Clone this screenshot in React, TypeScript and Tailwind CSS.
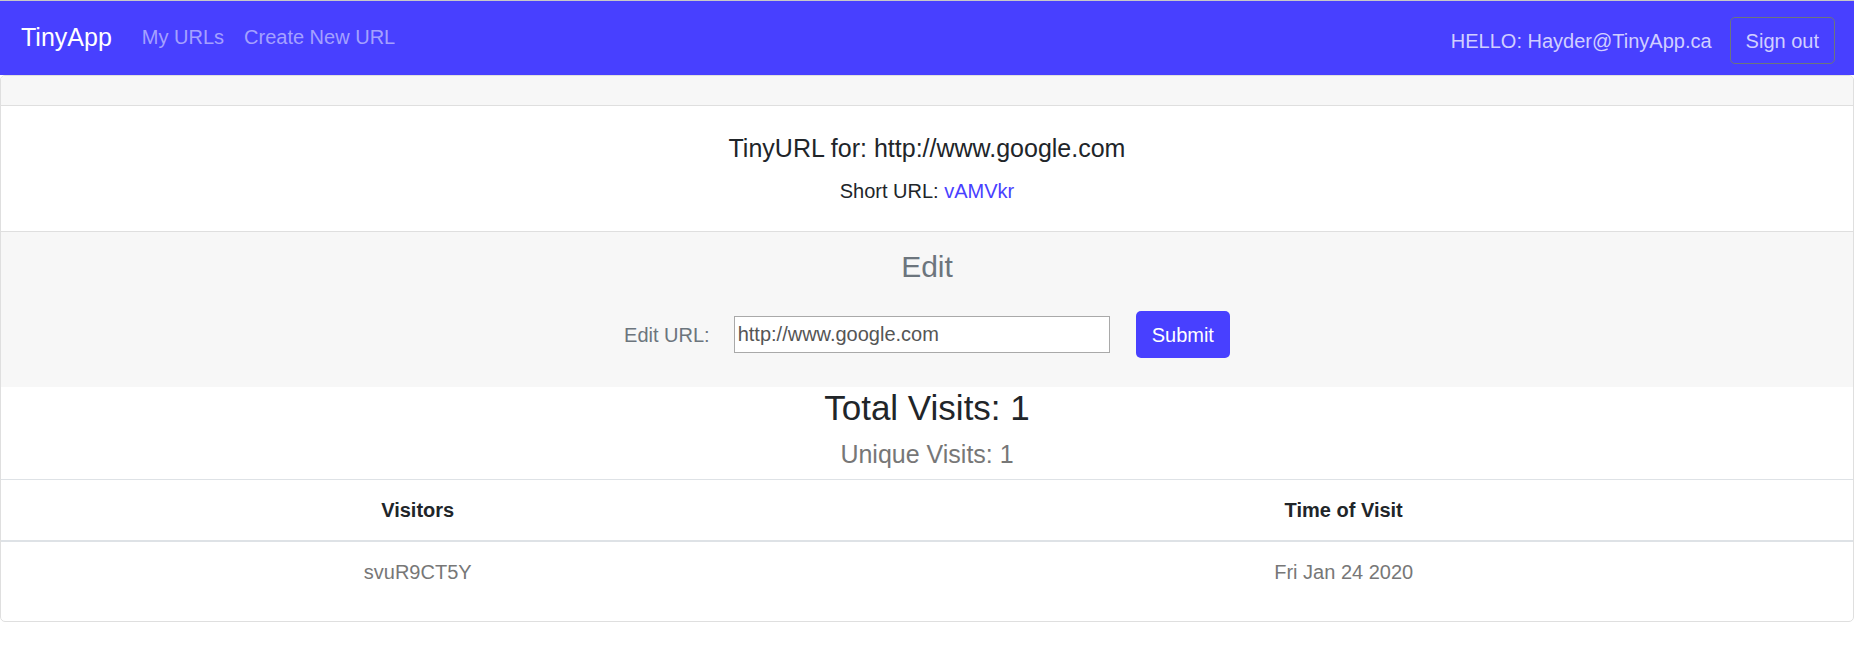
const visits = [{ visitor: 'svuR9CT5Y', time: 'Fri Jan 24 2020' }];

const App = () => {
  return (
    <div className="min-h-[650px] bg-white font-['Liberation_Sans',Arial,sans-serif] text-[20px] text-[#212529]">
      <nav className="flex h-[75px] items-center justify-between border-t border-[#c8c8c8] bg-[#4840ff] pl-[21px] pr-[19px]">
        <div className="flex items-center pb-[2px]">
          <a className="mr-[20px] text-[25px] leading-[37px] text-white">TinyApp</a>
          <a className="px-[10px] leading-[30px] text-[#a4a0ff]">My URLs</a>
          <a className="px-[10px] leading-[30px] text-[#a4a0ff]">Create New URL</a>
        </div>
        <div className="flex items-center gap-[18px] pt-[5px]">
          <span className="leading-[30px] text-[#d1cfff]">HELLO: Hayder@TinyApp.ca</span>
          <button className="h-[47px] rounded-[5px] border border-[#6c757d] px-[15px] leading-[30px] text-[#d1cfff]">
            Sign out
          </button>
        </div>
      </nav>

      <div className="overflow-hidden rounded-[5px] border border-[#dfdfdf]">
        <div className="h-[30px] border-b border-[#dfdfdf] bg-[#f7f7f7]" />

        <div className="pt-[27px] pb-[25px] text-center">
          <h5 className="text-[25px] leading-[30px]">TinyURL for: http://www.google.com</h5>
          <p className="mt-[13px] leading-[30px]">
            Short URL: <a className="text-[#4840ff]">vAMVkr</a>
          </p>
        </div>

        <div className="border-t border-[#dfdfdf] bg-[#f7f7f7] pt-[17px] pb-[29px] text-center">
          <h4 className="text-[30px] leading-[36px] text-[#6c757d]">Edit</h4>
          <form className="mt-[26px] flex h-[47px] items-center justify-center">
            <label className="text-[#6c757d]">Edit URL:</label>
            <input
              className="ml-[24px] h-[37px] w-[376px] border border-[#a9a9a9] bg-white pl-[3px] text-[20px] text-[#555]"
              defaultValue="http://www.google.com"
            />
            <button className="ml-[26px] h-[47px] rounded-[5px] bg-[#4840ff] px-[16px] text-white">Submit</button>
          </form>
        </div>

        <div className="text-center">
          <h3 className="text-[35px] leading-[42px]">Total Visits: 1</h3>
          <h5 className="mt-[10px] mb-[10px] text-[25px] leading-[30px] text-[#777]">Unique Visits: 1</h5>
        </div>

        <table className="w-full border-collapse text-center">
          <thead>
            <tr>
              <th className="w-[45%] border-t border-b-2 border-[#dee2e6] py-[15px] font-bold leading-[30px]">Visitors</th>
              <th className="border-t border-b-2 border-[#dee2e6] py-[15px] font-bold leading-[30px]">Time of Visit</th>
            </tr>
          </thead>
          <tbody>
            {visits.map((v, idx) => (
              <tr key={idx}>
                <td className="py-[15px] leading-[30px] text-[#777]">{v.visitor}</td>
                <td className="py-[15px] leading-[30px] text-[#777]">{v.time}</td>
              </tr>
            ))}
          </tbody>
        </table>
        <div className="h-[19px]" />
      </div>
    </div>
  );
};

export default App;
